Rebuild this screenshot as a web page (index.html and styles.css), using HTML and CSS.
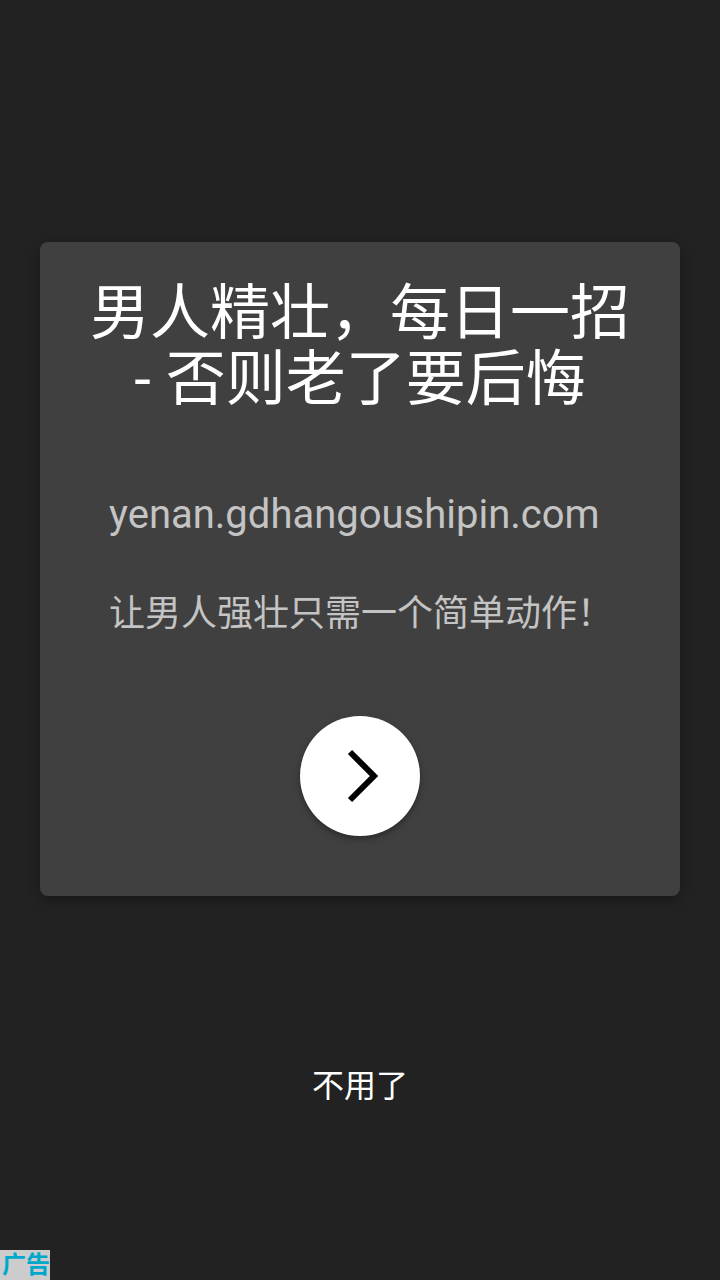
FILE: index.html
```html
<!DOCTYPE html>
<html lang="zh">
<head>
<meta charset="utf-8">
<title>广告</title>
<link rel="stylesheet" href="styles.css">
</head>
<body>
<main class="screen">
  <section class="card">
    <h1 class="title">男人精壮&#xFF0C;每日一招 - 否则老了要后悔</h1>
    <p class="domain">yenan.gdhangoushipin.com</p>
    <p class="desc">让男人强壮只需一个简单动作&#xFF01;</p>
    <button class="go" aria-label="打开">
      <svg width="32" height="54" viewBox="0 0 32 54"><path d="M3 3 L27 27 L3 51" fill="none" stroke="#000" stroke-width="6"/></svg>
    </button>
  </section>
  <p class="dismiss">不用了</p>
</main>
<div class="ad">广告</div>
</body>
</html>
```
FILE: styles.css
```css
* { box-sizing: border-box; }
html, body { margin: 0; height: 100%; }
body { background: #222222; font-family: Roboto, "Noto Sans CJK SC", sans-serif; overflow: hidden; position: relative; }
.screen { height: 1280px; padding-top: 242px; display: flex; flex-direction: column; align-items: center; }
.card { width: 640px; height: 654px; background: #404040; border-radius: 8px; box-shadow: 0 4px 12px rgba(0,0,0,.3); padding: 39px 40px 0; display: flex; flex-direction: column; align-items: center; }
.title { margin: 0; font-size: 60px; line-height: 66px; font-weight: 400; color: #fff; text-align: center; }
.domain { margin: 72px 0 0; font-size: 40px; line-height: 60px; color: #c4c4c4; align-self: flex-start; padding-left: 29px; }
.desc { margin: 39px 0 0; font-size: 36px; line-height: 60px; color: #c4c4c4; align-self: flex-start; padding-left: 29px; }
.go { margin-top: 72px; width: 120px; height: 120px; border: 0; border-radius: 50%; background: #fff; box-shadow: 0 3px 6px rgba(0,0,0,.35); display: flex; align-items: center; justify-content: center; padding: 0 0 0 5px; }
.dismiss { margin: 168px 0 0; font-size: 32px; line-height: 44px; color: #fff; }
.ad { position: absolute; left: 0; bottom: 0; width: 50px; height: 30px; padding-left: 2px; background: #cccccc; color: #00a8cc; font-size: 24px; font-weight: 700; line-height: 30px; white-space: nowrap; }
```
